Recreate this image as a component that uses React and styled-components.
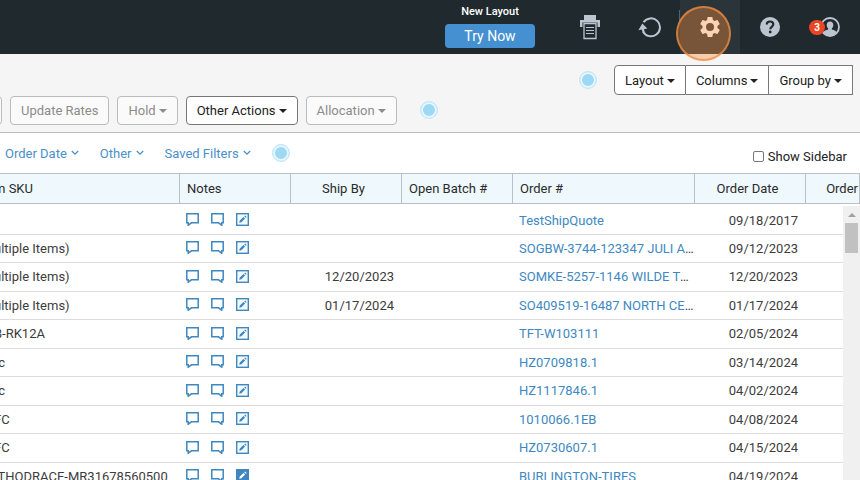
import React from 'react';
import styled, { createGlobalStyle, css } from 'styled-components';

const GlobalStyle = createGlobalStyle`
* {
  box-sizing: border-box;
}
body {
  margin: 0;
  overflow: hidden;
  background: #fff;
  color: #3c3c3c;
  font-family: Roboto, "Liberation Sans", sans-serif;
  font-size: 13px;
}
button, input {
  font-family: inherit;
  margin: 0;
}
`

const Page = styled.div`
display: flex;
flex-direction: column;
height: 100vh;
`

const TopBar = styled.header`
display: flex;
justify-content: flex-end;
height: 54px;
flex: none;
background: #20292e;
`
const Promo = styled.div`
width: 140px;
display: flex;
flex-direction: column;
align-items: center;
padding-top: 4px;
color: #fff;
font-size: 11px;
font-weight: 500;
line-height: 16px;
`
const TryButton = styled.button`
width: 90px;
height: 24px;
margin-top: 4px;
padding: 0;
border: 0;
border-radius: 4px;
background: #4590d0;
color: #fff;
font-size: 14px;
font-weight: 400;
`
const activeNav = css`
background: #2b3539;

&::before {
  content: "";
  position: absolute;
  left: -1px;
  top: 10px;
  width: 1px;
  height: 12px;
  background: #59636a;
}
`
const NavButton = styled.button`
position: relative;
width: 60px;
height: 54px;
padding: 0;
display: flex;
align-items: center;
justify-content: center;
border: 0;
background: transparent;
color: #bcc5cf;
${props => props.$active && activeNav}
`
const Spotlight = styled.span`
position: absolute;
top: 6px;
left: -4px;
width: 55px;
height: 55px;
border: 2px solid rgba(238, 140, 66, 0.75);
border-radius: 50%;
background: rgba(247, 137, 58, 0.38);
z-index: 2;
`
const Badge = styled.span`
position: absolute;
left: 9px;
top: 20px;
width: 16px;
height: 15px;
border-radius: 8px;
background: #ec4524;
color: #fff;
font-size: 10px;
font-weight: 700;
line-height: 15px;
text-align: center;
`

const Toolbar = styled.section`
flex: none;
padding: 11px 7px 7px 0;
background: #f5f5f5;
border-bottom: 1px solid #bbb;
`
const ToolRow = styled.div`
display: flex;
align-items: center;
justify-content: ${props => props.$end ? 'flex-end' : 'flex-start'};
gap: 8px;
height: 30px;
`
const Button = styled.button`
height: 29px;
padding: 0 10px;
display: flex;
align-items: center;
gap: 3px;
border: 1px solid #777;
border-radius: 4px;
background: #fff;
color: #222;
font-size: 13px;
white-space: nowrap;

&:disabled {
  border-color: #bbb;
  background: #fafafa;
  color: #8c8c8c;
}
`
const ButtonEdge = styled.span`
width: 10px;
height: 29px;
margin-left: -8px;
border: 1px solid #bbb;
border-radius: 4px;
background: #fafafa;
`
const Group = styled.div`
display: flex;
margin-left: 9px;

${Button} {
  height: 30px;
  border-radius: 0;
}
${Button}:first-child {
  border-radius: 4px 0 0 4px;
}
${Button} + ${Button} {
  border-left: 0;
}
`
const Caret = styled.span`
border: 4px solid transparent;
border-top-color: currentColor;
border-bottom: 0;
margin-top: 2px;
`
const Beacon = styled.span`
width: 18px;
height: 18px;
flex: none;
margin-left: ${props => props.$gap || 0}px;
border: 1px solid #c3e8fa;
border-radius: 50%;
background: #9dd8f5;
box-shadow: inset 0 0 0 2px #e9f6fd;
`

const FilterBar = styled.section`
flex: none;
display: flex;
align-items: center;
gap: 21px;
height: 40px;
padding: 0 13px 0 5px;
`
const FilterButton = styled.button`
display: flex;
align-items: center;
gap: 4px;
padding: 0;
border: 0;
background: none;
color: #4a90c9;
font-size: 13px;
white-space: nowrap;
`
const SidebarToggle = styled.label`
display: flex;
align-items: center;
gap: 4px;
margin-left: auto;
padding-top: 6px;
color: #222;
`
const Checkbox = styled.input`
appearance: none;
width: 11px;
height: 11px;
border: 1px solid #777;
border-radius: 2px;
background: #fff;
`

const Grid = styled.main`
position: relative;
flex: 1;
min-height: 0;
overflow: hidden;
`
const Table = styled.table`
width: calc(100% + 8px);
margin-left: -8px;
table-layout: fixed;
border-collapse: separate;
border-spacing: 0;
`
const headPadding = {
    left: '0 7px',
    center: '0 11px 0 6px',
    right: '0 1px',
}
const Th = styled.th`
height: 31px;
padding: ${props => headPadding[props.$align || 'left']};
border: solid #b9c1c6;
border-width: 1px 1px 1px 0;
background: #eef8fd;
color: #2b2b2b;
font-weight: 400;
text-align: ${props => props.$align || 'left'};
white-space: nowrap;
overflow: hidden;

&:first-child {
  padding-left: 2px;
}
`
const Row = styled.tr`
height: 29px;

&:nth-child(even) {
  height: 28px;
}
&:first-child {
  height: 31px;
}
&:first-child td {
  padding-top: 3px;
}
`
const dateCell = css`
text-align: right;
padding-right: 8px;
`
const Td = styled.td`
padding: 0 1px 0 6px;
border-bottom: 1px solid #ddd;
line-height: 18px;
white-space: nowrap;
overflow: hidden;
text-overflow: ellipsis;
${props => props.$date && dateCell}

&:first-child {
  padding-left: 2px;
  text-overflow: clip;
}
`
const OrderLink = styled.a`
color: #4088c2;
text-decoration: none;
`
const Notes = styled.div`
display: flex;
gap: 12px;
padding-bottom: 2px;
color: #3f87bf;
`
const NoteButton = styled.button`
display: flex;
padding: 0;
border: 0;
background: none;
color: inherit;
`
const Scrollbar = styled.div`
position: absolute;
top: 33px;
right: 0;
bottom: 0;
width: 17px;
padding: 7px 2px 0;
display: flex;
flex-direction: column;
align-items: center;
gap: 6px;
background: #f0f0f0;
`
const ScrollUp = styled.span`
border: 4px solid transparent;
border-bottom-color: #a0a0a0;
border-top: 0;
`
const Thumb = styled.span`
width: 13px;
height: 30px;
background: #c1c1c1;
`

const PrinterIcon = () => (
    <svg width="20" height="26" viewBox="0 0 20 26">
        <path d="M4 1h12v5H4zM0 6h20v7H0z" fill="currentColor" />
        <path d="M2.500 8.500h15v17h-15z" fill="#20292e" />
        <path d="M4 9.500h12v15H4z" fill="none" stroke="currentColor" strokeWidth="1.3" />
        <path d="M6 13.500h8M6 16.500h8M6 19.500h8" stroke="currentColor" strokeWidth="1.2" />
    </svg>
)

const RefreshIcon = () => (
    <svg width="24" height="22" viewBox="0 0 24 22">
        <path d="M5.600 6.200A9 9 0 1 1 5 15.500" fill="none" stroke="currentColor" strokeWidth="2" />
        <path d="M4.300 7.500L9.300 12.600L6 13.200L6.600 16L4.800 16.400L3.600 13.600L0.400 14.200z" fill="currentColor" />
    </svg>
)

const GearIcon = () => (
    <svg width="24" height="24" viewBox="0 0 24 24">
        <path fill="#fff" d="M19.430 12.980c.04-.32.07-.64.07-.98s-.03-.66-.07-.98l2.110-1.650c.19-.15.24-.42.12-.64l-2-3.460c-.12-.22-.39-.3-.61-.22l-2.490 1c-.52-.4-1.080-.73-1.690-.98l-.38-2.650C14.460 2.180 14.250 2 14 2h-4c-.25 0-.46.18-.49.42l-.38 2.650c-.61.25-1.170.59-1.690.98l-2.490-1c-.23-.09-.49 0-.61.22l-2 3.460c-.13.22-.07.49.12.64l2.110 1.650c-.04.32-.07.65-.07.98s.03.66.07.98l-2.110 1.650c-.19.15-.24.42-.12.64l2 3.460c.12.22.39.3.61.22l2.490-1c.52.4 1.080.73 1.690.98l.38 2.650c.03.24.24.42.49.42h4c.25 0 .46-.18.49-.42l.38-2.650c.61-.25 1.170-.59 1.690-.98l2.490 1c.23.09.49 0 .61-.22l2-3.460c.12-.22.07-.49-.12-.64zM12 16a4 4 0 1 1 0-8 4 4 0 0 1 0 8z" />
    </svg>
)

const HelpIcon = () => (
    <svg width="20" height="20" viewBox="0 0 20 20">
        <circle cx="10" cy="10" r="10" fill="currentColor" />
        <path d="M6.800 7.600C6.800 5.500 8.200 4.500 10 4.500s3.300 1 3.300 2.800c0 2.200-3 2.400-3 5" fill="none" stroke="#20292e" strokeWidth="2.200" />
        <circle cx="10.200" cy="15" r="1.400" fill="#20292e" />
    </svg>
)

const UserIcon = () => (
    <svg width="20" height="20" viewBox="0 0 20 20">
        <circle cx="10" cy="10" r="9" fill="none" stroke="currentColor" strokeWidth="1.800" />
        <path d="M10 4.500c2 0 3.300 1.400 3.300 3.500 0 1.500-.6 2.700-1.500 3.400v1.200c2.500.6 4 1.300 4.800 2.800A9 9 0 0 1 10 19a9 9 0 0 1-6.600-3.600c.8-1.500 2.300-2.200 4.800-2.800v-1.200C7.300 10.700 6.700 9.500 6.700 8c0-2.100 1.300-3.500 3.300-3.500z" fill="currentColor" />
    </svg>
)

const ChevronIcon = () => (
    <svg width="8" height="6" viewBox="0 0 8 6">
        <path d="M0.800 1l3.200 3.200L7.200 1" fill="none" stroke="currentColor" strokeWidth="1.300" />
    </svg>
)

const BubbleIcon = ({ flip }) => (
    <svg width="13" height="13" viewBox="0 0 13 13">
        <path
            d={flip ? 'M0.800 0.800h11.400v9h-1.400v2.400L7.500 9.800H0.800z' : 'M0.800 0.800h11.400v9H5.500L2.200 12.200V9.800H0.800z'}
            fill="none"
            stroke="currentColor"
            strokeWidth="1.500"
        />
    </svg>
)

const EditIcon = ({ filled }) => (
    <svg width="13" height="13" viewBox="0 0 13 13">
        <rect x="0.700" y="0.700" width="11.600" height="11.600" fill={filled ? 'currentColor' : '#f2fafe'} stroke="currentColor" strokeWidth="1.400" />
        <path d="M3.200 9.800l.6-2.200L7.500 3.900l1.600 1.600-3.700 3.700zM8.200 3.200l.9-.8 1.600 1.600-.9.8z" fill={filled ? '#fff' : 'currentColor'} />
    </svg>
)

const orders = [
    { sku: '', shipBy: '', order: 'TestShipQuote', date: '09/18/2017' },
    { sku: 'ultiple Items)', shipBy: '', order: 'SOGBW-3744-123347 JULI ANN', date: '09/12/2023' },
    { sku: 'ultiple Items)', shipBy: '12/20/2023', order: 'SOMKE-5257-1146 WILDE TOYOTA', date: '12/20/2023' },
    { sku: 'ultiple Items)', shipBy: '01/17/2024', order: 'SO409519-16487 NORTH CENTRAL', date: '01/17/2024' },
    { sku: 'B-RK12A', shipBy: '', order: 'TFT-W103111', date: '02/05/2024' },
    { sku: 'rc', shipBy: '', order: 'HZ0709818.1', date: '03/14/2024' },
    { sku: 'rc', shipBy: '', order: 'HZ1117846.1', date: '04/02/2024' },
    { sku: 'FC', shipBy: '', order: '1010066.1EB', date: '04/08/2024' },
    { sku: 'FC', shipBy: '', order: 'HZ0730607.1', date: '04/15/2024' },
    { sku: '-THODRACE-MR31678560500', shipBy: '', order: 'BURLINGTON-TIRES', date: '04/19/2024', noted: true },
]

export default function App() {
    return (
        <Page>
            <GlobalStyle />
            <TopBar>
                <Promo>
                    New Layout
                    <TryButton>Try Now</TryButton>
                </Promo>
                <NavButton aria-label="Print"><PrinterIcon /></NavButton>
                <NavButton aria-label="Refresh"><RefreshIcon /></NavButton>
                <NavButton aria-label="Settings" $active>
                    <GearIcon />
                    <Spotlight />
                </NavButton>
                <NavButton aria-label="Help"><HelpIcon /></NavButton>
                <NavButton aria-label="Account">
                    <UserIcon />
                    <Badge>3</Badge>
                </NavButton>
            </TopBar>

            <Toolbar>
                <ToolRow $end>
                    <Beacon />
                    <Group>
                        <Button>Layout<Caret /></Button>
                        <Button>Columns<Caret /></Button>
                        <Button>Group by<Caret /></Button>
                    </Group>
                </ToolRow>
                <ToolRow>
                    <ButtonEdge />
                    <Button disabled>Update Rates</Button>
                    <Button disabled>Hold<Caret /></Button>
                    <Button>Other Actions<Caret /></Button>
                    <Button disabled>Allocation<Caret /></Button>
                    <Beacon $gap={15} />
                </ToolRow>
            </Toolbar>

            <FilterBar>
                <FilterButton>Order Date<ChevronIcon /></FilterButton>
                <FilterButton>Other<ChevronIcon /></FilterButton>
                <FilterButton>Saved Filters<ChevronIcon /></FilterButton>
                <Beacon />
                <SidebarToggle>
                    <Checkbox type="checkbox" />
                    Show Sidebar
                </SidebarToggle>
            </FilterBar>

            <Grid>
                <Table>
                    <colgroup>
                        <col width="188" />
                        <col width="111" />
                        <col width="111" />
                        <col width="111" />
                        <col width="182" />
                        <col width="111" />
                        <col />
                    </colgroup>
                    <thead>
                        <tr>
                            <Th>m SKU</Th>
                            <Th>Notes</Th>
                            <Th $align="center">Ship By</Th>
                            <Th>Open Batch #</Th>
                            <Th>Order #</Th>
                            <Th $align="center">Order Date</Th>
                            <Th $align="right">Order</Th>
                        </tr>
                    </thead>
                    <tbody>
                        {orders.map(item => (
                            <Row key={item.order}>
                                <Td>{item.sku}</Td>
                                <Td>
                                    <Notes>
                                        <NoteButton aria-label="Customer note"><BubbleIcon /></NoteButton>
                                        <NoteButton aria-label="Internal note"><BubbleIcon flip /></NoteButton>
                                        <NoteButton aria-label="Edit note"><EditIcon filled={item.noted} /></NoteButton>
                                    </Notes>
                                </Td>
                                <Td $date>{item.shipBy}</Td>
                                <Td />
                                <Td><OrderLink href="#">{item.order}</OrderLink></Td>
                                <Td $date>{item.date}</Td>
                                <Td />
                            </Row>
                        ))}
                    </tbody>
                </Table>
                <Scrollbar>
                    <ScrollUp />
                    <Thumb />
                </Scrollbar>
            </Grid>
        </Page>
    )
}
